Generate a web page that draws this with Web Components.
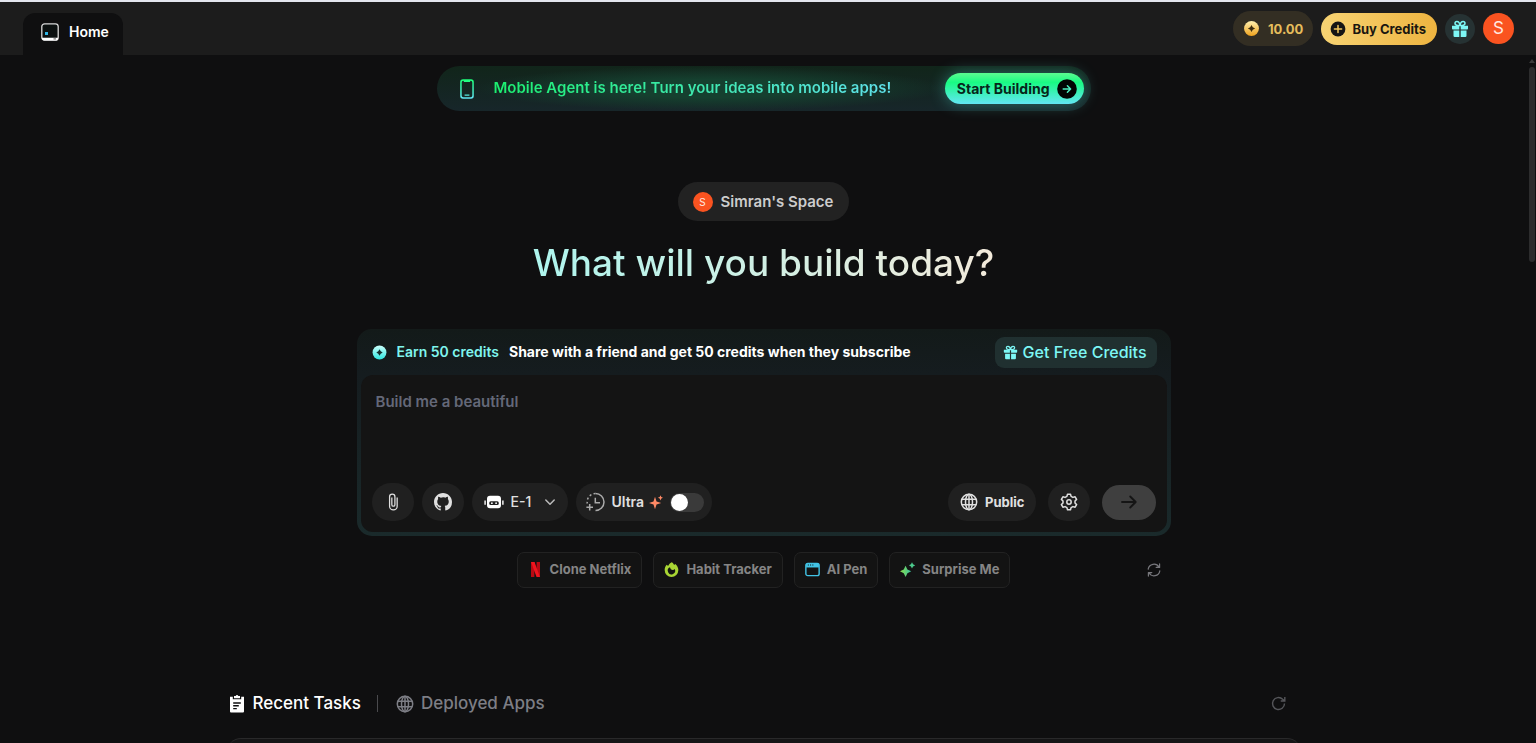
<!DOCTYPE html>
<html lang="en">
<head>
<meta charset="UTF-8">
<meta name="viewport" content="width=device-width, initial-scale=1">
<title>Home</title>
<style>
  body {
    margin: 0;
    background: #0f0f10;
    color: #fff;
    font-family: Inter, "Liberation Sans", sans-serif;
    font-size: 14px;
    line-height: 20px;
  }
</style>
</head>
<body>
<app-shell>
  <app-header slot="header" credits="10.00" initial="S">Home</app-header>
  <agent-banner action="Start Building">Mobile Agent is here! Turn your ideas into mobile apps!</agent-banner>
  <space-hero space="Simran's Space" initial="S">What will you build today?</space-hero>
  <prompt-card placeholder="Build me a beautiful">
    <referral-bar slot="top" lead="Earn 50 credits" action="Get Free Credits">Share with a friend and get 50 credits when they subscribe</referral-bar>
  </prompt-card>
  <idea-list>
    <idea-chip icon="netflix">Clone Netflix</idea-chip>
    <idea-chip icon="flame">Habit Tracker</idea-chip>
    <idea-chip icon="window">AI Pen</idea-chip>
    <idea-chip icon="stars">Surprise Me</idea-chip>
  </idea-list>
  <task-section></task-section>
</app-shell>

<script>
  // box + markup for every icon, drawn in currentColor unless it has its own colours
  const ICONS = {
    logo: ['0 0 18 18', `
      <rect x=".8" y=".8" width="16.4" height="16.4" rx="2.8" fill="#0b1010" stroke="#d8d8d8" stroke-width="1.3"/>
      <path d="M1 14.8h16v.6a2 2 0 0 1-2 2H3a2 2 0 0 1-2-2z" fill="#fff"/>
      <rect x="12.5" y="15.4" width="2.5" height="1" fill="#555"/>
      <rect x="4" y="9" width="3" height="3" fill="#2fb5e6"/>`],
    coin: ['0 0 16 16', `
      <defs><linearGradient id="g" x1="0" y1="0" x2="0" y2="1"><stop offset="0" stop-color="#fff0b0"/><stop offset="1" stop-color="#efa31d"/></linearGradient></defs>
      <circle cx="8" cy="8" r="7" fill="url(#g)"/>
      <path d="M8 4.6 9.2 6.8 11.4 8 9.2 9.2 8 11.4 6.8 9.2 4.6 8 6.8 6.8z" fill="#3a2b10"/>`],
    coinTeal: ['0 0 16 16', `
      <defs><linearGradient id="g" x1="0" y1="0" x2="0" y2="1"><stop offset="0" stop-color="#c9fffb"/><stop offset="1" stop-color="#2ee6e0"/></linearGradient></defs>
      <circle cx="8" cy="8" r="7.4" fill="url(#g)"/>
      <path d="M8 4.6 9.3 6.7 11.4 8 9.3 9.3 8 11.4 6.7 9.3 4.6 8 6.7 6.7z" fill="#12302f"/>`],
    plusCircle: ['0 0 16 16', `
      <circle cx="8" cy="8" r="7.4" fill="#151515"/>
      <path d="M8 4.4v7.2M4.4 8h7.2" stroke="#f2c65a" stroke-width="1.5" stroke-linecap="round"/>`],
    gift: ['0 0 18 18', `
      <path d="M1 5.8h7.3v3.6H1.9A.9.9 0 0 1 1 8.5zM9.7 5.8H17v2.7a.9.9 0 0 1-.9.9H9.7zM2.5 10.5h5.8V17H3.7a1.2 1.2 0 0 1-1.2-1.2zM9.7 10.5h5.8v5.3a1.2 1.2 0 0 1-1.2 1.2H9.7z" fill="currentColor"/>
      <path d="M8.9 5.6C8.7 3 7.4 1.5 5.9 1.5 4.7 1.5 4 2.3 4 3.3c0 1.3 1.2 2.1 2.7 2.3zM9.1 5.6c.2-2.6 1.5-4.1 3-4.1 1.2 0 1.9.8 1.9 1.8 0 1.3-1.2 2.1-2.7 2.3z" fill="none" stroke="currentColor" stroke-width="1.5"/>`],
    phone: ['0 0 14 20', `
      <defs><linearGradient id="g" x1="0" y1="0" x2="0" y2="1"><stop offset="0" stop-color="#1bff76"/><stop offset="1" stop-color="#63e2f5"/></linearGradient></defs>
      <path d="M3 .2h8A2.8 2.8 0 0 1 13.8 3v14a2.8 2.8 0 0 1-2.8 2.8H3A2.8 2.8 0 0 1 .2 17V3A2.8 2.8 0 0 1 3 .2zM3.4 1.7A1.7 1.7 0 0 0 1.7 3.4v13.2a1.7 1.7 0 0 0 1.7 1.7h7.2a1.7 1.7 0 0 0 1.7-1.7V3.4a1.7 1.7 0 0 0-1.7-1.7L9.9 2.9H4.1zM4.6 15.6h4.8v1.2H4.6z" fill="url(#g)" fill-rule="evenodd"/>`],
    goCircle: ['0 0 20 20', `
      <circle cx="10" cy="10" r="9.8" fill="#020504"/>
      <path d="M6.2 10h7.2M10.4 6.8l3.2 3.2-3.2 3.2" fill="none" stroke="#4deec0" stroke-width="1.5" stroke-linecap="round" stroke-linejoin="round"/>`],
    clip: ['0 0 24 24', `
      <path fill="currentColor" d="M16.7 6v11.5a4.2 4.2 0 0 1-8.4 0V5a2.7 2.7 0 0 1 5.4 0v10.5a1.2 1.2 0 0 1-2.4 0V6H9.6v9.5a2.9 2.9 0 0 0 5.8 0V5a4.4 4.4 0 0 0-8.8 0v12.5a5.9 5.9 0 0 0 11.8 0V6z"/>`],
    github: ['0 0 16 16', `
      <path fill="currentColor" d="M8 0C3.58 0 0 3.58 0 8c0 3.54 2.29 6.53 5.47 7.59.4.07.55-.17.55-.38 0-.19-.01-.82-.01-1.49-2.01.37-2.53-.49-2.69-.94-.09-.23-.48-.94-.82-1.13-.28-.15-.68-.52-.01-.53.63-.01 1.08.58 1.23.82.72 1.21 1.87.87 2.33.66.07-.52.28-.87.51-1.07-1.78-.2-3.64-.89-3.64-3.95 0-.87.31-1.59.82-2.15-.08-.2-.36-1.02.08-2.12 0 0 .67-.21 2.2.82A7.6 7.6 0 0 1 8 3.86c.68 0 1.36.09 2 .27 1.53-1.04 2.2-.82 2.2-.82.44 1.1.16 1.92.08 2.12.51.56.82 1.27.82 2.15 0 3.07-1.87 3.75-3.65 3.95.29.25.54.73.54 1.48 0 1.07-.01 1.93-.01 2.2 0 .21.15.46.55.38A8.01 8.01 0 0 0 16 8c0-4.42-3.58-8-8-8z"/>`],
    robot: ['0 0 20 14', `
      <path fill="currentColor" fill-rule="evenodd" d="M6 .8h8a3 3 0 0 1 3 3v6.4a3 3 0 0 1-3 3H6a3 3 0 0 1-3-3V3.8a3 3 0 0 1 3-3zM6.8 6.3A1.6 1.6 0 0 0 5.2 7.9v.6a1.6 1.6 0 0 0 1.6 1.6h6.4a1.6 1.6 0 0 0 1.6-1.6v-.6a1.6 1.6 0 0 0-1.6-1.6z"/>
      <path fill="currentColor" d="M.4 5.6h1.4v4.2H.4zM18.2 5.6h1.4v4.2h-1.4z"/>
      <circle cx="7.9" cy="8.2" r=".9" fill="currentColor"/><circle cx="12.1" cy="8.2" r=".9" fill="currentColor"/>`],
    chevron: ['0 0 12 12', `
      <path d="M1.8 4 6 8.2 10.2 4" fill="none" stroke="currentColor" stroke-width="1.5" stroke-linecap="round" stroke-linejoin="round"/>`],
    clock: ['0 0 20 20', `
      <path d="M10.5 1.5a8.5 8.5 0 0 1 0 17" fill="none" stroke="currentColor" stroke-width="1.5"/>
      <path d="M10.5 1.5A8.5 8.5 0 0 0 2.3 11.5" fill="none" stroke="currentColor" stroke-width="1.5" stroke-dasharray="2 2.3"/>
      <path d="M10.3 5.8v5h4.7M4.7 12v6.6M1.4 15.3H8" fill="none" stroke="currentColor" stroke-width="1.5"/>`],
    spark: ['0 0 14 14', `
      <path d="M6 1.8 7.5 6.5 12.2 8 7.5 9.5 6 14.2 4.5 9.5-.2 8 4.5 6.5z" fill="#ff8a66"/>
      <path d="M11.5.2l.8 1.8 1.8.8-1.8.8-.8 1.8-.8-1.8-1.8-.8 1.8-.8z" fill="#ff8a66"/>`],
    globe: ['0 0 18 18', `
      <g fill="none" stroke="currentColor" stroke-width="1.5"><circle cx="9" cy="9" r="7.7"/><ellipse cx="9" cy="9" rx="3.5" ry="7.7"/><path d="M2 6.3h14M2 11.7h14M9 1.3v15.4"/></g>`],
    gear: ['0 0 18 18', `
      <path d="M7.5 1.2h3l.6 2.2 1.8 1 2.2-.6 1.5 2.6L15 8v2l1.6 1.6-1.5 2.6-2.2-.6-1.8 1-.6 2.2h-3l-.6-2.2-1.8-1-2.2.6-1.5-2.6L3 10V8L1.4 6.4l1.5-2.6 2.2.6 1.8-1z" fill="none" stroke="currentColor" stroke-width="1.5" stroke-linejoin="round"/>
      <circle cx="9" cy="9" r="2.2" fill="none" stroke="currentColor" stroke-width="1.5"/>`],
    arrow: ['0 0 18 18', `
      <path d="M2 9h13.5M10.2 3.5 15.7 9l-5.5 5.5" fill="none" stroke="currentColor" stroke-width="1.9" stroke-linecap="round" stroke-linejoin="round"/>`],
    netflix: ['0 0 16 16', `
      <path d="M3.2 0h3.6v16l-3.6.2zM9.2 0h3.6v16.2l-3.6-.2z" fill="#b80a13"/>
      <path d="M3.2 0h3.8l5.8 16.2-3.8-.4z" fill="#f0141f"/>`],
    flame: ['0 0 14 14', `
      <path fill="#a8d534" fill-rule="evenodd" d="M7.2.2c1.2.7 1.9 1.6 2.2 2.7L10.5 1.8c1.8 1.6 2.9 3.5 2.9 5.7a6.4 6.4 0 0 1-12.8 0c0-2 .8-3.7 2-4.900l1.2 1.2C4.5 2.200 5.700 1 7.200.2zM5.600 5A3.400 3.400 0 1 0 10 6.600c-.5.6-1.100.9-1.800.9C6.800 7.500 5.800 6.500 5.600 5z"/>`],
    window: ['0 0 14 14', `
      <rect x=".8" y="1.3" width="12.4" height="11.4" rx="1.8" fill="none" stroke="#42c4e6" stroke-width="1.3"/>
      <path d="M1 1.5h12v3.6H1z" fill="#42c4e6"/>
      <path d="M2.6 2.8h1M4.7 2.8h1M6.8 2.8h1" stroke="#141414" stroke-width="1"/>`],
    stars: ['0 0 14 14', `
      <defs><linearGradient id="g" x1="0" y1="0" x2="1" y2="0"><stop offset="0" stop-color="#8fe04b"/><stop offset="1" stop-color="#35bfa0"/></linearGradient></defs>
      <path d="M5.2 3.4 6.9 7 10.5 8.7 6.9 10.4 5.2 14 3.5 10.4-.1 8.700 3.500 7z" fill="url(#g)"/>
      <path d="M11.2.2l1 1.9 1.9 1-1.9 1-1 1.9-1-1.9-1.9-1 1.9-1z" fill="#4cc98c"/>`],
    sync: ['0 0 14 14', `
      <path d="M1.2 6.2A5.8 5.8 0 0 1 12 4.2M12.8 7.8A5.8 5.8 0 0 1 2 9.8M12.6.9v3.5H9.2M1.4 13.1V9.6h3.4" fill="none" stroke="currentColor" stroke-width="1.2" stroke-linecap="round" stroke-linejoin="round"/>`],
    reload: ['0 0 14 14', `
      <path d="M12.6 7A5.6 5.6 0 1 1 10.9 3l1.7 1.5M12.9.9v3.8H9.1" fill="none" stroke="currentColor" stroke-width="1.3"/>`],
    clipboard: ['0 0 16 18', `
      <path fill="currentColor" fill-rule="evenodd" d="M1 1.8h2.8v2.4h8.4V1.8H15v14.8a1 1 0 0 1-1 1H2a1 1 0 0 1-1-1zM4.2 7.3v1.4h7.6V7.3zM4.2 10.1v1.4h5.6v-1.4zM4.2 12.9v1.4h3.6v-1.4z"/>
      <path fill="currentColor" d="M5 .9h1.7a1.4 1.4 0 0 1 2.6 0H11v2.3H5z"/>`]
  };

  class UiIcon extends HTMLElement {
    constructor() {
      super();
      const [box, shapes] = ICONS[this.getAttribute('name')];
      const root = this.attachShadow({mode: 'open'});
      root.innerHTML = `
        <style>
          :host {display: inline-flex; flex: none; width: var(--icon, 18px); height: var(--icon, 18px);}
          svg {width: 100%; height: 100%;}
        </style>
        <svg viewBox="${box}" aria-hidden="true">${shapes}</svg>
      `;
    }
  }

  class UserAvatar extends HTMLElement {
    constructor() {
      super();
      this.attachShadow({mode: 'open'}).innerHTML = `
        <style>
          :host {
            display: inline-flex; flex: none; align-items: center; justify-content: center;
            width: var(--avatar, 31px); height: var(--avatar, 31px);
            border-radius: 50%; background: #fa5320; color: #ffe9e0;
            font-size: var(--avatar-font, 17px); font-weight: 400; line-height: 1;
          }
        </style>
        <slot></slot>
      `;
    }
  }

  class AppShell extends HTMLElement {
    constructor() {
      super();
      this.attachShadow({mode: 'open'}).innerHTML = `
        <style>
          :host {display: flex; flex-direction: column; height: 100vh; overflow: hidden; box-sizing: border-box; border-top: 2px solid #e3e6ee;}
          .body {display: flex; flex: 1; min-height: 0;}
          main {flex: 1; min-width: 0; display: flex; flex-direction: column; align-items: center; padding: 11px 24px 0; overflow: hidden;}
          .rail {display: flex; flex-direction: column; align-items: center; gap: 4px; width: 9px; padding-top: 4px;}
          .rail::before {content: ""; border: 3px solid transparent; border-top-width: 0; border-bottom: 4px solid #3a3a3a;}
          .thumb {width: 6px; height: 28.5%; border-radius: 3px; background: #2c2c2d;}
        </style>
        <slot name="header"></slot>
        <div class="body">
          <main><slot></slot></main>
          <div class="rail" aria-hidden="true"><div class="thumb"></div></div>
        </div>
      `;
    }
  }

  class AppHeader extends HTMLElement {
    constructor() {
      super();
      this.attachShadow({mode: 'open'}).innerHTML = `
        <style>
          :host {display: flex; justify-content: space-between; height: 53px; flex: none; padding: 0 22px 0 23px; background: #1c1c1c; box-sizing: border-box;}
          .tab {
            display: flex; align-items: center; gap: 10px; align-self: flex-end;
            box-sizing: border-box; height: 42px; padding: 0 14px 4px 18px;
            border-radius: 12px 12px 0 0; background: #0f0f10; color: #fff;
            font-weight: 600; text-decoration: none;
          }
          .actions {display: flex; align-items: center; gap: 8px;}
          .credits {
            display: flex; align-items: center; gap: 8px; height: 35px; padding: 0 10px;
            border-radius: 18px; background: #332e23; color: #e6bd5c; font-size: 13px; font-weight: 700;
          }
          .credits ui-icon {--icon: 17px;}
          button {border: 0; font: inherit; cursor: pointer;}
          .buy {
            display: flex; align-items: center; gap: 6px; height: 32px; padding: 0 11px 0 9px;
            border-radius: 16px; background: linear-gradient(90deg, #f7d373, #eeb440);
            color: #1a1710; font-size: 13px; font-weight: 700;
          }
          .buy ui-icon {--icon: 16px;}
          .gift {
            display: flex; align-items: center; justify-content: center; width: 30px; height: 30px;
            padding: 0; border-radius: 50%; background: #263233; color: #7df7f5;
          }
        </style>
        <a class="tab" href="#"><ui-icon name="logo"></ui-icon><slot></slot></a>
        <div class="actions">
          <div class="credits"><ui-icon name="coin"></ui-icon><span>${this.getAttribute('credits')}</span></div>
          <button class="buy"><ui-icon name="plusCircle"></ui-icon>Buy Credits</button>
          <button class="gift" aria-label="Rewards"><ui-icon name="gift"></ui-icon></button>
          <user-avatar>${this.getAttribute('initial')}</user-avatar>
        </div>
      `;
    }
  }

  class AgentBanner extends HTMLElement {
    constructor() {
      super();
      this.attachShadow({mode: 'open'}).innerHTML = `
        <style>
          :host {
            display: flex; align-items: center; width: 100%; max-width: 654px; height: 45px; flex: none;
            box-sizing: border-box; padding: 0 7px 0 20px; border-radius: 23px;
            background: linear-gradient(180deg, #11251a, #17262a);
          }
          ui-icon {--icon: 20px;}
          .glow {flex: 1; padding: 12px 0 13px 17px; background: radial-gradient(closest-side, #15402f 40%, #15402f00);}
          .text {
            font-size: 15px; font-weight: 600;
            background: linear-gradient(90deg, #1cf070, #5fe0ea);
            -webkit-background-clip: text; background-clip: text; color: transparent;
          }
          button {
            display: flex; align-items: center; gap: 7px; height: 31px; padding: 0 7px 0 12px;
            border: 0; border-radius: 16px; color: #06261a; cursor: pointer;
            background: linear-gradient(180deg, #5cfb90, #19fb83 30%, #62e6f3);
            box-shadow: 0 0 16px #4fe0d866;
            font: inherit; font-size: 14px; font-weight: 700;
          }
        </style>
        <ui-icon name="phone"></ui-icon>
        <div class="glow"><span class="text"><slot></slot></span></div>
        <button>${this.getAttribute('action')}<ui-icon name="goCircle"></ui-icon></button>
      `;
    }
  }

  class SpaceHero extends HTMLElement {
    constructor() {
      super();
      this.attachShadow({mode: 'open'}).innerHTML = `
        <style>
          :host {display: flex; flex-direction: column; align-items: center; gap: 18px; margin-top: 71px;}
          button {
            display: flex; align-items: center; gap: 8px; height: 39px; padding: 0 16px 0 15px;
            border: 0; border-radius: 20px; background: #222; color: #ccc; cursor: pointer;
            font: inherit; font-size: 15px; font-weight: 600;
          }
          user-avatar {--avatar: 20px; --avatar-font: 10px;}
          h1 {
            margin: 0; font-size: 37px; font-weight: 500; line-height: 48px;
            background: linear-gradient(90deg, #aef5ee, #f3eadb);
            -webkit-background-clip: text; background-clip: text; color: transparent;
          }
        </style>
        <button><user-avatar>${this.getAttribute('initial')}</user-avatar>${this.getAttribute('space')}</button>
        <h1><slot></slot></h1>
      `;
    }
  }

  class ReferralBar extends HTMLElement {
    constructor() {
      super();
      this.attachShadow({mode: 'open'}).innerHTML = `
        <style>
          :host {display: flex; align-items: center; height: 46px; padding: 0 10px 0 11px; font-size: 14px; font-weight: 700;}
          ui-icon {--icon: 15px;}
          .lead {margin: 0 10px; color: #7ff5ee; font-weight: 600;}
          button {
            display: flex; align-items: center; gap: 5px; margin-left: auto; height: 31px; padding: 0 10px 0 8px;
            border: 0; border-radius: 9px; background: #203030; color: #7df7f5; cursor: pointer;
            font: inherit; font-size: 16px; font-weight: 500;
          }
        </style>
        <ui-icon name="coinTeal"></ui-icon>
        <span class="lead">${this.getAttribute('lead')}</span>
        <span><slot></slot></span>
        <button><ui-icon name="gift"></ui-icon>${this.getAttribute('action')}</button>
      `;
    }
  }

  class PromptCard extends HTMLElement {
    constructor() {
      super();
      this.attachShadow({mode: 'open'}).innerHTML = `
        <style>
          :host {
            display: block; box-sizing: border-box; width: 100%; max-width: 814px; margin-top: 42px;
            padding: 0 4px 4px; border-radius: 15px;
            background: linear-gradient(180deg, #131a19, #151c1f 22%, #1a2a2b);
          }
          .panel {border-radius: 12px; background: #141414; padding: 11px;}
          textarea {
            display: block; box-sizing: border-box; width: 100%; height: 97px; padding: 6px 4px;
            border: 0; outline: 0; resize: none; background: none; color: #fff;
            font: inherit; font-size: 15px;
          }
          textarea::placeholder {color: #646878; font-weight: 600;}
          .tools {display: flex; align-items: center; gap: 8px;}
          .end {display: flex; align-items: center; gap: 12px; margin-left: auto;}
          .pill {
            display: flex; align-items: center; justify-content: center; box-sizing: border-box;
            min-width: 42px; height: 38px; padding: 0 12px; gap: 7px;
            border: 0; border-radius: 19px; background: #202020; color: #e0e0e0;
            font: inherit; font-size: 14px; font-weight: 500; cursor: pointer;
          }
          .public {padding: 0 11px 0 12px; font-size: 13px; font-weight: 700;}
          .round {padding: 0;}
          select {
            appearance: none; padding: 0 5px 0 0; border: 0; outline: 0; background: none;
            color: inherit; font: inherit; cursor: pointer;
          }
          .robot {--icon: 20px; color: #fff;}
          .chevron {--icon: 12px; color: #bbb;}
          .clock {--icon: 20px; color: #aaa;}
          .spark {--icon: 14px;}
          .ultra {padding: 0 8px 0 9px;}
          .ultra label {display: flex; align-items: center; gap: 5px; font-weight: 600;}
          input {
            appearance: none; display: flex; width: 34px; height: 19px; margin: 0;
            border-radius: 10px; background: #3a3a3a; cursor: pointer;
          }
          input::before {content: ""; width: 17px; height: 17px; margin: 1px; border-radius: 50%; background: #fff;}
          input:checked {justify-content: flex-end;}
          .send {width: 54px; height: 35px; padding: 0; background: #3f3f3f; color: #151515;}
        </style>
        <slot name="top"></slot>
        <div class="panel">
          <textarea aria-label="Prompt" placeholder="${this.getAttribute('placeholder')}"></textarea>
          <div class="tools">
            <button class="pill round" aria-label="Attach file"><ui-icon name="clip"></ui-icon></button>
            <button class="pill round" aria-label="Import from GitHub"><ui-icon name="github"></ui-icon></button>
            <div class="pill">
              <ui-icon class="robot" name="robot"></ui-icon>
              <select aria-label="Agent"><option>E-1</option></select>
              <ui-icon class="chevron" name="chevron"></ui-icon>
            </div>
            <div class="pill ultra">
              <ui-icon class="clock" name="clock"></ui-icon>
              <label for="ultra">Ultra<ui-icon class="spark" name="spark"></ui-icon></label>
              <input type="checkbox" role="switch" id="ultra">
            </div>
            <div class="end">
              <button class="pill public"><ui-icon name="globe"></ui-icon>Public</button>
              <button class="pill round" aria-label="Settings"><ui-icon name="gear"></ui-icon></button>
              <button class="pill send" aria-label="Send"><ui-icon name="arrow"></ui-icon></button>
            </div>
          </div>
        </div>
      `;
    }
  }

  class IdeaList extends HTMLElement {
    constructor() {
      super();
      this.attachShadow({mode: 'open'}).innerHTML = `
        <style>
          :host {display: grid; grid-template-columns: 1fr auto 1fr; align-items: center; width: 100%; max-width: 814px; margin-top: 16px;}
          .chips {grid-column: 2; display: flex; gap: 11px;}
          button {justify-self: end; display: flex; margin-right: 10px; padding: 0; border: 0; background: none; color: #77777c; cursor: pointer;}
          ui-icon {--icon: 14px;}
        </style>
        <div class="chips"><slot></slot></div>
        <button aria-label="More ideas"><ui-icon name="sync"></ui-icon></button>
      `;
    }
  }

  class IdeaChip extends HTMLElement {
    constructor() {
      super();
      this.attachShadow({mode: 'open'}).innerHTML = `
        <style>
          :host {display: block;}
          button {
            display: flex; align-items: center; gap: 7px; box-sizing: border-box; height: 36px; padding: 0 10px 2px;
            border: 1px solid #222; border-radius: 7px; background: #131313; color: #858585; cursor: pointer;
            font: inherit; font-size: 13px; font-weight: 700;
          }
          ui-icon {--icon: 15px;}
        </style>
        <button><ui-icon name="${this.getAttribute('icon')}"></ui-icon><slot></slot></button>
      `;
    }
  }

  class TaskSection extends HTMLElement {
    constructor() {
      super();
      this.attachShadow({mode: 'open'}).innerHTML = `
        <style>
          :host {display: flex; flex-direction: column; gap: 22px; flex: 1; width: 100%; max-width: 1074px; margin-top: 103px;}
          .bar {display: flex; align-items: center; padding: 0 15px 0 1px;}
          button {
            display: flex; align-items: center; gap: 7px; padding: 0; border: 0; background: none;
            color: #7d7e85; cursor: pointer; font: inherit; font-size: 17px; font-weight: 500; line-height: 25px;
          }
          .active {color: #fff;}
          .line {width: 1px; height: 17px; margin: 0 18px 0 16px; background: #4a4a4d;}
          .reload {margin-left: auto; color: #55565a;}
          .reload ui-icon {--icon: 15px;}
          .list {height: 200px; border-top: 1px solid #29292a; border-radius: 14px 14px 0 0; background: #151516;}
        </style>
        <div class="bar">
          <button class="active"><ui-icon name="clipboard"></ui-icon>Recent Tasks</button>
          <div class="line"></div>
          <button><ui-icon name="globe"></ui-icon>Deployed Apps</button>
          <button class="reload" aria-label="Reload"><ui-icon name="reload"></ui-icon></button>
        </div>
        <div class="list"></div>
      `;
    }
  }

  customElements.define('ui-icon', UiIcon)
  customElements.define('user-avatar', UserAvatar)
  customElements.define('app-shell', AppShell)
  customElements.define('app-header', AppHeader)
  customElements.define('agent-banner', AgentBanner)
  customElements.define('space-hero', SpaceHero)
  customElements.define('referral-bar', ReferralBar)
  customElements.define('prompt-card', PromptCard)
  customElements.define('idea-list', IdeaList)
  customElements.define('idea-chip', IdeaChip)
  customElements.define('task-section', TaskSection)
</script>
</body>
</html>
